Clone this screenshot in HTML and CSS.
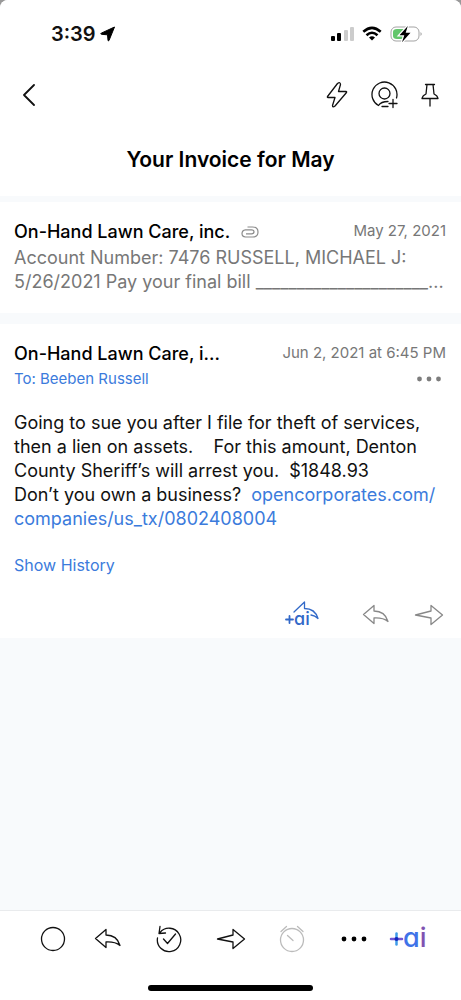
FILE: index.html
```html
<!DOCTYPE html>
<html lang="en">
<head>
<meta charset="utf-8">
<meta name="viewport" content="width=device-width, initial-scale=1">
<title>Your Invoice for May</title>
<link rel="stylesheet" href="styles.css">
</head>
<body>
<div class="screen">
  <header class="top">
    <div class="status">
      <div class="status-left">
        <span class="clock">3:39</span>
        <svg width="16" height="16" viewBox="0 0 16 16"><path d="M14.5 1 9 14.5Q8.3 15.500 8 14.200L7.500 8.800 1.500 8.300Q0 7.900 1.200 7.200Z" fill="#000" stroke="#000" stroke-linejoin="round"/></svg>
      </div>
      <div class="status-right">
        <svg width="24" height="16" viewBox="0 0 24 16"><rect x="1" y="10" width="4" height="5" rx="1"/><rect x="7" y="7" width="4" height="8" rx="1"/><rect x="14" y="4" width="4" height="11" rx="1" fill="#ccc"/><rect x="20" y="1" width="4" height="14" rx="1" fill="#ccc"/></svg>
        <svg width="20" height="16" viewBox="0 0 20 16" fill="none" stroke="#000" stroke-width="2.600"><path d="M1.300 5.800Q10-2 18.700 5.800M4.500 9.200Q10 4.300 15.500 9.200"/><path d="M7 11.400Q10 8.900 13 11.400L10 14.600Z" fill="#000" stroke="none"/></svg>
        <svg width="33" height="18" viewBox="0 0 33 18"><rect x="1" y="2" width="28" height="14" rx="5" fill="#fff" stroke="#a3a3a3"/><path d="M7 4H15V14H7Q3 14 3 11V7Q3 4 7 4Z" fill="#63c66c"/><path d="M30.500 7Q33 9 30.500 11Z" fill="#a3a3a3"/><path d="M17.800 1 9.500 10.200H14.300L12 17.200 20.500 7.800H15.700Z" stroke="#fff" stroke-width="2.500" paint-order="stroke"/></svg>
      </div>
    </div>
    <nav class="nav">
      <button class="icon" aria-label="Back"><svg width="14" height="22" viewBox="0 0 14 22"><path d="M12 1 2 11 12 21" stroke-width="1.800"/></svg></button>
      <div class="nav-actions">
        <button class="icon" aria-label="Quick actions"><svg width="24" height="28" viewBox="0 0 24 28"><path d="M12.500 2.500 2.500 15.500Q2 16.500 3 16.500H10L7.500 24.500Q7.500 27 10 25L21.500 11.500Q22 10.500 21 10.500H13.500L15.500 3.500Q15.300 0.500 12.500 2.500Z"/></svg></button>
        <button class="icon" aria-label="Add contact"><svg width="28" height="28" viewBox="0 0 28 28"><path d="M25.500 17A12.500 12.500 0 1 0 7.500 24.500Q10 20.500 17 20.500M11 25.500H17M18 22.500H26M22 18.500V26.500"/><circle cx="13.500" cy="12.500" r="5.500"/></svg></button>
        <button class="icon" aria-label="Pin"><svg width="18" height="24" viewBox="0 0 18 24"><path d="M4.500 1.500H13.500M6 1.500 5 11Q1.500 12.500 1 15.500H17Q16.500 12.500 13 11L12 1.500M9 15.500V23"/></svg></button>
      </div>
    </nav>
    <h1 class="title">Your Invoice for May</h1>
  </header>

  <main class="thread">
    <article class="card summary">
      <div class="row">
        <h2 class="sender">On-Hand Lawn Care, inc.</h2>
        <svg class="clip" width="18" height="12" viewBox="0 0 18 12"><path d="M5 7.800H10.500Q13 7.800 13 5.800T10.500 3.800H4.500Q1 4.300 1 7.500T4.500 11H11.500Q17 11 17 6T11.500 1H6.500" fill="none" stroke="#8c8c8c" stroke-width="1.200"/></svg>
        <time class="date">May 27, 2021</time>
      </div>
      <p class="preview">Account Number: 7476 RUSSELL, MICHAEL J:<br>5/26/2021 Pay your final bill _____________________...</p>
    </article>

    <article class="card message">
      <div class="row">
        <h2 class="sender">On-Hand Lawn Care, i...</h2>
        <time class="date">Jun 2, 2021 at 6:45 PM</time>
      </div>
      <div class="row recipients">
        <a class="to" href="#">To: Beeben Russell</a>
        <button class="icon more" aria-label="Message options"><svg width="24" height="6" viewBox="0 0 24 6"><circle cx="2.500" cy="3" r="2.400"/><circle cx="12" cy="3" r="2.400"/><circle cx="21.500" cy="3" r="2.400"/></svg></button>
      </div>
      <p class="body">Going to sue you after I file for theft of services,<br>then a lien on assets. &nbsp;&nbsp; For this amount, Denton<br>County Sheriff’s will arrest you. &nbsp;$1848.93<br>Don’t you own a business? &nbsp;<a href="#">opencorporates.com/<br>companies/us_tx/0802408004</a></p>
      <a class="history" href="#">Show History</a>
      <div class="replies">
        <button class="icon ai-reply" aria-label="AI reply"><svg width="36" height="36" viewBox="0 -4 36 36"><path d="M10 11 20.500 1V7.500Q31 7.500 34 17.500Q31 14.500 27 14"/><path d="M2 18.500H9M5.500 15V22" stroke-width="1.800"/><text class="ai-text" x="10" y="24" font-size="18">ai</text></svg></button>
        <button class="icon" aria-label="Reply"><svg width="28" height="22" viewBox="0 0 28 22"><path d="M1.500 10.500 12 1.500V7Q23 7 26 17.500Q21 13.500 12 14V19.500Z"/></svg></button>
        <button class="icon" aria-label="Forward"><svg width="30" height="22" viewBox="0 0 30 22"><path d="M1.500 11 17 7V1.500L28.500 11 17 20.500V14Z"/></svg></button>
      </div>
    </article>
  </main>

  <footer class="bottom">
    <div class="tools">
      <button class="icon" aria-label="Select"><svg width="26" height="28" viewBox="0 0 26 28"><circle cx="13" cy="14" r="11.500"/></svg></button>
      <button class="icon tool" aria-label="Reply"><svg width="28" height="22" viewBox="0 0 28 22"><path d="M1.500 10.500 12 1.500V7Q23 7 26 17.500Q21 13.500 12 14V19.500Z"/></svg></button>
      <button class="icon tool" aria-label="Mark done"><svg width="28" height="28" viewBox="0 0 28 28"><path d="M2.500 13A11.700 11.700 0 1 0 5 7.500M5 1.500 4 8.500 10.500 8M8.500 14 12.500 18.500 20.500 9"/></svg></button>
      <button class="icon tool" aria-label="Forward"><svg width="30" height="22" viewBox="0 0 30 22"><path d="M1.500 11 17 7V1.500L28.500 11 17 20.500V14Z"/></svg></button>
      <button class="icon tool faded" aria-label="Snooze"><svg width="26" height="28" viewBox="0 0 26 28"><circle cx="13" cy="15" r="11.500"/><path d="M2 6.500 7.500 1.500M18.500 1.500 24 6.500M8.500 10.500 14 15.500"/></svg></button>
      <button class="icon tool dots" aria-label="More"><svg width="26" height="6" viewBox="0 0 26 6"><circle cx="3" cy="3" r="2.400"/><circle cx="13" cy="3" r="2.400"/><circle cx="23" cy="3" r="2.400"/></svg></button>
      <button class="icon assistant" aria-label="AI assistant"><svg width="38" height="40" viewBox="0 0 38 40"><defs><linearGradient id="ai" gradientUnits="userSpaceOnUse" x1="14" y1="0" x2="37" y2="0"><stop offset="0.650" stop-color="#3f72e8"/><stop offset="0.850" stop-color="#8052b0"/></linearGradient></defs><path d="M2 20H13" stroke="#7457d4" stroke-width="2.500"/><path d="M7.500 14.500V25.500" stroke="#3e9be8" stroke-width="2.500"/><circle cx="7.500" cy="20" r="2" fill="#1526bd" stroke="none"/><text class="ai-text" x="14" y="28" font-size="27" fill="url(#ai)">ai</text></svg></button>
    </div>
    <div class="home-bar"></div>
  </footer>
</div>
</body>
</html>
```
FILE: styles.css
```css
* { box-sizing: border-box; }
body { margin: 0; background: #999; font-family: Inter, "Liberation Sans", sans-serif; color: #111; }
h1, h2, p { margin: 0; }
a { color: #3b7bdc; text-decoration: none; }
svg { display: block; flex: none; }

.screen { min-height: 100vh; display: flex; flex-direction: column; background: #f8fafc; border-radius: 8px 8px 0 0; overflow: hidden; }
.icon { display: flex; align-items: center; justify-content: center; padding: 0; border: 0; background: none; color: #111; cursor: pointer; }
.icon svg { fill: none; stroke: currentColor; stroke-width: 1.3px; stroke-linejoin: round; stroke-linecap: round; }

.top { background: #fff; }
.status { display: flex; justify-content: space-between; align-items: center; height: 68px; padding: 0 38px 0 51px; }
.status-left, .status-right { display: flex; align-items: center; }
.status-left { gap: 4px; }
.status-right { gap: 8px; }
.clock { font-size: 20px; line-height: 24px; font-weight: 600; }
.nav { display: flex; justify-content: space-between; align-items: center; height: 54px; padding: 0 22px; }
.nav-actions { display: flex; align-items: center; gap: 22px; }
.title { padding: 24px 16px 22px; font-size: 21px; line-height: 28px; font-weight: 600; text-align: center; color: #000; }

.thread { flex: 1; padding-top: 6px; background: #f8fafc; }
.card { background: #fff; padding: 18px 15px 0 14px; }
.summary { padding-bottom: 19px; margin-bottom: 11px; }
.row { display: flex; align-items: center; }
.sender { font-size: 18px; line-height: 24px; font-weight: 500; color: #000; }
.clip { margin-left: 11px; }
.date { margin-left: auto; font-size: 15px; line-height: 20px; color: #777; }
.row .date { padding-bottom: 3px; }
.preview { padding-top: 2px; font-size: 18px; line-height: 24px; color: #777; white-space: nowrap; }
.recipients { justify-content: space-between; padding-right: 5px; }
.to { font-size: 15px; line-height: 26px; }
.more { color: #7d7d7d; }
.icon.more svg, .icon.dots svg { fill: currentColor; stroke: none; }
.body { padding-top: 19px; font-size: 18px; line-height: 24px; white-space: nowrap; }
.history { display: block; padding-top: 22px; font-size: 16px; line-height: 24px; }
.replies { display: flex; justify-content: flex-end; align-items: center; gap: 24px; padding: 20px 2px 5px; }
.replies .icon { color: #888; }
.replies .ai-reply { color: #3269c8; margin-right: 18px; }
.ai-text { font-family: Inter, sans-serif; font-weight: 500; font-feature-settings: "cv11"; stroke: none; }
.ai-reply .ai-text { fill: #3269c8; }

.bottom { background: #fff; border-top: 1px solid #e9ebed; padding-bottom: 9px; }
.tools { display: flex; justify-content: space-between; align-items: center; height: 56px; padding: 0 34px 0 40px; }
.tool { min-width: 40px; }
.assistant { margin-left: -6px; }
.faded { color: #bbb; }
.dots { color: #000; }
.home-bar { width: 36%; height: 6px; margin: 18px auto 0; border-radius: 3px; background: #000; }
```
